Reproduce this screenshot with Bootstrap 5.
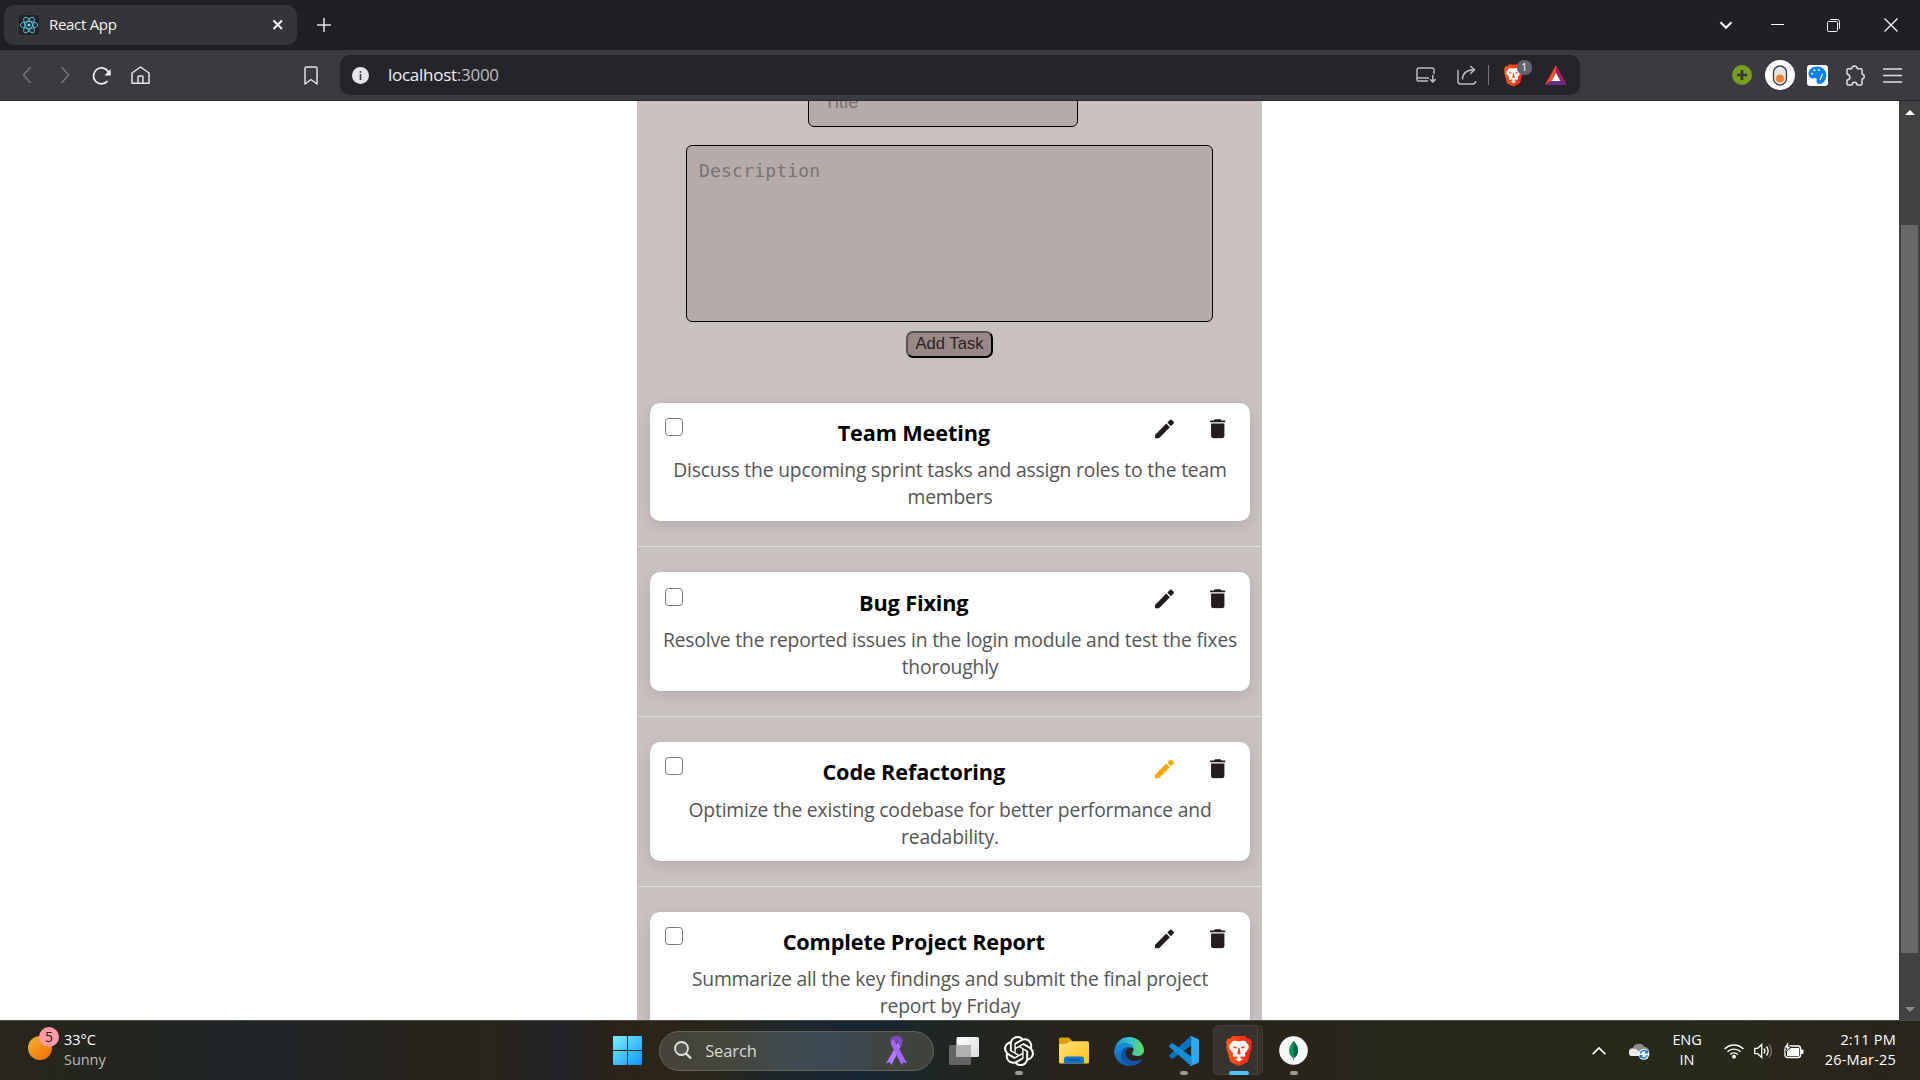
<!DOCTYPE html>
<html lang="en">
<head>
<meta charset="utf-8">
<title>React App</title>
<link rel="stylesheet" href="https://cdn.jsdelivr.net/npm/bootstrap@5.3.0/dist/css/bootstrap.min.css">
<style>
  body { width: 1920px; height: 1080px; overflow: hidden; font-family: "Open Sans", "Noto Sans", sans-serif; background: #fff; }
  svg { display: block; flex: none; overflow: visible; }

  /* Browser chrome */
  .tab-strip { height: 50px; background: #202024; padding-left: 4px; }
  .browser-tab { width: 293px; height: 40px; border-radius: 10px; background: #353539; color: #f3f3f5; padding: 0 13px 0 15px; font-size: 15px; letter-spacing: -.3px; }
  .tab-name { margin-left: 10px; padding-bottom: 1px; }
  .toolbar { height: 51px; background: #3b3a3f; border-bottom: 1px solid #2a2a2e; }
  .cell { display: flex; align-items: center; justify-content: center; flex: none; }
  .address { width: 1240px; height: 40px; border-radius: 10px; background: #252529; }
  .address-text { font-size: 17px; letter-spacing: -.27px; color: #f1f1f3; line-height: 24px; margin-left: 16px; }
  .address-text span { color: #bdbdc2; }
  .shield-count { top: -4px; left: 13px; width: 14.5px; height: 15px; border-radius: 7px; background: #62646f; color: #fff; font: 10.5px/15px "Open Sans", sans-serif; text-align: center; }
  .divider { width: 1px; height: 20px; background: #76767b; }

  /* Page */
  .viewport-area { height: 919px; overflow: hidden; }
  .todo-panel { width: 625px; background: #c9c0c0; }
  .field { display: block; background: #b5acaa; border: 1px solid #000; border-radius: 6px; outline: 0; resize: none; }
  .field::placeholder { color: #757575; opacity: 1; }
  .title-field { width: 270px; height: 47px; margin-top: -21px; margin-right: 13px; padding: 0 16px 4px 15px; font: 18.7px "Liberation Sans", sans-serif; }
  .desc-field { width: 527px; height: 177px; margin-top: 18px; padding: 14px 12px; font: 18px/22px "DejaVu Sans Mono", monospace; letter-spacing: .2px; }
  .add-btn { width: 87px; height: 27px; margin-top: 9px; padding: 0 0 1px; background: #988987; border: 2px outset #000; border-color: #555 #000 #000 #555; border-radius: 7px; color: #2a2222; font: 16.6px/20px "Liberation Sans", sans-serif; }
  .task-list { margin-top: 19.55px; }
  .task-item { padding: 25px 12px 25px 13px; border-bottom: 1px solid #ddd; }
  .task-card { height: 118.75px; background: #fff; border-radius: 10px; box-shadow: 0 4px 14px rgba(0,0,0,.1); }
  .task-head { padding: 15.3px 12.5px 0 15px; }
  .task-head input { appearance: none; width: 18px; height: 18px; margin: 0; border: 1.4px solid #767676; border-radius: 3.5px; background: #fff; }
  .task-title { font-size: 21.7px; line-height: 30px; letter-spacing: -.15px; font-weight: 700; color: #000; text-align: center; margin: 0; }
  .task-actions { gap: 13px; padding-top: .7px; }
  .task-actions .cell { width: 40px; height: 21px; color: #231c1c; }
  .task-actions .editing { color: orange; }
  .task-text { font-size: 19.3px; line-height: 27px; letter-spacing: -.175px; color: #555; text-align: center; padding: 0 12.2px; margin: 8.2px 0 0; }
  .scroll-track { width: 21px; background: #424242; }
  .scroll-thumb { width: 17px; height: 728px; background: #686868; margin-top: 102px; }

  /* Taskbar */
  .taskbar { height: 60px; border-top: 1px solid #444a40; color: #fff;
    background: linear-gradient(90deg, #29261d 0, #22251f 140px, #20252a 250px, #25231e 380px, #29241c 490px, #222427 560px, #2c2319 620px, #2a2617 700px, #1f2628 770px, #182735 860px, #202622 950px, #26231d 1060px, #28241c 1250px, #27271a 1400px, #252719 1600px, #252a1b 1710px, #2a261b 1800px, #29241c 100%); }
  .weather-icon { width: 64px; height: 59px; padding-left: 28px; padding-top: 7px; }
  .sun { width: 24px; height: 24px; border-radius: 50%; background: linear-gradient(135deg, #f5b32d, #f06a08); }
  .alert-count { left: 39px; top: 6px; width: 20px; height: 20px; border-radius: 50%; background: #ff99a2; color: #2d1518; font-size: 14px; line-height: 20px; text-align: center; }
  .tiny-line { font-size: 14.5px; line-height: 20px; letter-spacing: -.05px; padding-bottom: 1px; }
  .clock-lines { width: 92px; letter-spacing: .2px; }
  .search-pill { width: 275px; height: 40px; border-radius: 20px; border: 1px solid #64645c; background: linear-gradient(90deg, #454339 0, #46473c 25%, #3f4a50 48%, #3c4854 66%, #3f453f 84%, #40423c); padding: 0 26px 0 14px; color: #d9d9d6; font-size: 16.5px; letter-spacing: -.1px; }
  .app { width: 55px; height: 59px; position: relative; display: flex; align-items: center; justify-content: center; flex: none; }
  .app.running::after { content: ""; position: absolute; bottom: 5px; width: 8px; height: 4px; border-radius: 2px; background: #9a9a97; }
  .app.active::after { width: 20px; background: #4cc2ff; }
  .app.active::before { content: ""; position: absolute; inset: 4px 8px 5px 2px; border: 1px solid #45413c; border-radius: 5px; background: #37332e; box-shadow: 5px 0 0 -1px #34312b, 5px 0 0 #413e38; }
  .app svg { position: relative; }
</style>
<script src="https://cdn.jsdelivr.net/npm/bootstrap@5.3.0/dist/js/bootstrap.bundle.min.js"></script>
</head>
<body class="d-flex flex-column">

<svg width="0" height="0" class="position-absolute">
  <defs>
    <symbol id="pencil" viewBox="0 0 20 20"><path fill="currentColor" d="M0 20v-3.600L11.600 4.700l3.700 3.700L3.800 20zM16.300 7.400l-3.700-3.700 2.600-2.800q1-1 2 0l1.900 1.900q.9.9 0 1.800z"/></symbol>
    <symbol id="trash" viewBox="0 0 16 20"><path fill="currentColor" d="M0 1.400h4L5.200.2h5.600L12 1.400h4v1.900H0zM1.100 4.600h13.800v13q0 2.200-2.200 2.200H3.300q-2.200 0-2.200-2.200z"/></symbol>
    <linearGradient id="flame" x1="0" x2="1"><stop stop-color="#ff5a1f"/><stop offset="1" stop-color="#ff2010"/></linearGradient>
    <symbol id="lion" viewBox="0 0 26 30">
      <path fill="url(#flame)" d="M6.500 0h13l2.400 2.700 2.300-.2L26 6.300l-.8 2.400.6 2-3.600 13.500q-.5 1.700-2 2.600L13 30l-7.200-3.200q-1.500-.9-2-2.600L.2 10.700l.6-2L0 6.300l1.800-3.800 2.300.2z"/>
      <path fill="#fff" d="M13 5.500l3.200-.8 3 .3 3.500 4.300-.3 1.500.5 1.300-4 5.100.5 2.200-1.600 1.700-2.200-.9-1.600 1.400 2.700 1.700-3.700 2.500-3.700-2.500 2.700-1.700-1.600-1.400-2.200.9-1.600-1.700.5-2.200-4-5.100.5-1.300-.3-1.500L6.800 5l3-.3z"/>
      <path fill="#ff4015" d="M7 10.200l4.200.9-1 1.300-2.600-.4zM19 10.200l-4.200.9 1 1.300 2.600-.4zM12.300 12h1.400l.6 4.700 1.200.5L13 18.500l-2.500-1.300 1.200-.5z"/>
    </symbol>
  </defs>
</svg>

<header>
  <div class="tab-strip d-flex align-items-center">
    <div class="browser-tab d-flex align-items-center">
      <svg width="20" height="20" viewBox="0 0 20 20"><rect width="20" height="20" rx="2" fill="#222"/><g fill="none" stroke="#58bdd8" stroke-width="1"><ellipse cx="10" cy="10" rx="8.800" ry="3.400"/><ellipse cx="10" cy="10" rx="8.800" ry="3.400" transform="rotate(60 10 10)"/><ellipse cx="10" cy="10" rx="8.800" ry="3.400" transform="rotate(120 10 10)"/></g><circle cx="10" cy="10" r="1.600" fill="#61dafb"/></svg>
      <span class="tab-name flex-grow-1">React App</span>
      <svg width="12" height="12" viewBox="0 0 12 12"><path d="M1.500 1.500l8.500 8.500M10 1.500L1.500 10" stroke="#fff" stroke-width="2"/></svg>
    </div>
    <div class="cell" style="width:54px"><svg width="14" height="14" viewBox="0 0 14 14"><path d="M7 0v14M0 7h14" stroke="#e4e4e6" stroke-width="1.500"/></svg></div>
    <div class="d-flex align-items-center ms-auto">
      <div class="cell" style="width:48px"><svg width="14" height="8" viewBox="0 0 14 8"><path d="M1.500 1.200L7 6.700l5.500-5.500" fill="none" stroke="#f2f2f2" stroke-width="2.200"/></svg></div>
      <div class="cell" style="width:54px"><svg width="13" height="3" viewBox="0 0 13 3"><path d="M0 .5h13" stroke="#fff"/></svg></div>
      <div class="cell" style="width:58px"><svg width="13" height="13" viewBox="0 0 13 13"><g fill="none" stroke="#f4f4f4"><rect x=".5" y="2.500" width="10" height="10" rx="1"/><path d="M3 .5h7.500q2 0 2 2V10"/></g></svg></div>
      <div class="cell" style="width:58px"><svg width="14" height="14" viewBox="0 0 14 14"><path d="M.5.5l13 13M13.500.5l-13 13" stroke="#fff" stroke-width="1.200"/></svg></div>
    </div>
  </div>

  <div class="toolbar d-flex align-items-center">
    <div class="cell ms-2" style="width:38px"><svg width="10" height="18" viewBox="0 0 10 18"><path d="M8.500 1L1.500 9l7 8" fill="none" stroke="#76767c" stroke-width="1.500"/></svg></div>
    <div class="cell" style="width:38px"><svg width="10" height="18" viewBox="0 0 10 18"><path d="M1.500 1l7 8-7 8" fill="none" stroke="#76767c" stroke-width="1.500"/></svg></div>
    <div class="cell" style="width:36px"><svg width="20" height="18" viewBox="0 0 20 18"><path d="M15.500 15.200A8 8 0 1 1 16.500 6" fill="none" stroke="#f0f0f2" stroke-width="1.800"/><path d="M18.700 3v6.500h-6.200z" fill="#f0f0f2"/></svg></div>
    <div class="cell" style="width:40px"><svg width="19" height="18" viewBox="0 0 19 18"><g fill="none" stroke="#e8e8ea" stroke-width="1.500" stroke-linejoin="round"><path d="M1 7l8.500-6L18 7v10.300H1z"/><path d="M7 17v-6q0-1 1-1h3q1 0 1 1v6"/></g></svg></div>
    <div class="cell" style="width:40px;margin-left:131px"><svg width="14" height="19" viewBox="0 0 14 19"><path d="M1 2.500Q1 1 2.500 1h9Q13 1 13 2.500V18l-6-4.500L1 18z" fill="none" stroke="#e2e2e5" stroke-width="1.500" stroke-linejoin="round"/></svg></div>
    <div class="address d-flex align-items-center" style="margin-left:9px">
      <div class="cell ms-2" style="width:24px"><svg width="17" height="17" viewBox="0 0 17 17"><circle cx="8.500" cy="8.500" r="8.500" fill="#e4e4e8"/><path d="M8.500 4v1.700M8.500 7v6" stroke="#3c3c40" stroke-width="1.600"/></svg></div>
      <div class="address-text">localhost<span>:3000</span></div>
      <div class="cell ms-auto" style="width:40px"><svg width="20" height="16" viewBox="0 0 20 16"><g fill="none" stroke="#bcbcc0" stroke-width="1.500"><path d="M18 7V3q0-2-2-2H3Q1 1 1 3v10q0 1 1 1h10M1 11h12M16.800 8v7M14 12.200l2.800 2.700 2.800-2.700"/></g></svg></div>
      <div class="cell" style="width:42px"><svg width="20" height="20" viewBox="0 0 20 20"><g fill="none" stroke="#bcbcc0" stroke-width="1.500"><path d="M1 5v11.500Q1 19 3.500 19h12q3 0 3.200-3M5.500 14.500Q5.500 5 17 4.700M13.300 1l4.200 3.700-4.200 4"/></g></svg></div>
      <div class="divider"></div>
      <div class="cell" style="width:49px"><div class="position-relative"><svg width="19" height="23"><use href="#lion"/></svg><div class="shield-count position-absolute">1</div></div></div>
      <div class="cell" style="width:35px;margin-right:7px"><svg width="22" height="20" viewBox="0 0 22 20"><path fill="#ff4724" d="M11 0L0 20l7-4.500 4-7z"/><path fill="#9e1f63" d="M11 0l11 20-7-4.500-4-7z"/><path fill="#662d91" d="M0 20h22l-7-4.500H7z"/><path fill="#fff" d="M11 8l4.500 8h-9z"/></svg></div>
    </div>
    <div class="cell ms-auto" style="width:38px"><svg width="20" height="20" viewBox="0 0 20 20"><circle cx="10" cy="10" r="10" fill="#779e20"/><path d="M10 5v10M5 10h10" stroke="#30343b" stroke-width="2.600"/></svg></div>
    <div class="cell" style="width:38px"><svg width="30" height="30" viewBox="0 0 30 30"><circle cx="15" cy="15" r="15" fill="#fff"/><rect x="8.500" y="6" width="13" height="19" rx="6.500" fill="#e5e7e6" stroke="#434345" stroke-width="1.400"/><circle cx="15" cy="18.500" r="4" fill="#f5802e"/></svg></div>
    <div class="cell" style="width:37px"><svg width="21" height="21" viewBox="0 0 21 21"><rect width="21" height="21" rx="3" fill="#fff"/><path d="M10 1.500C5 1.500 1.500 5 1.500 8.700s3 5.300 5.500 4.500c2-.7 3.100.3 2.600 2.300-.4 2 .6 3.500 2.800 3.500 4 0 7-4.500 7-9.100S15.500 1.500 10 1.500z" fill="#0a80f5"/><g fill="#fff"><circle cx="5" cy="8.800" r="1"/><circle cx="7.500" cy="5.300" r="1"/><circle cx="12" cy="5" r="1"/></g><path d="M15.500 9L13 15" stroke="#fff" stroke-width="1.100"/></svg></div>
    <div class="cell" style="width:37px"><svg width="20" height="21" viewBox="0 0 20 21"><path d="M3 3.700h3.700q.4-2.700 2.800-2.700t2.800 2.700H16q1 0 1 1v4.200q2.200.4 2.200 2.600T17 14v5q0 1-1 1h-4q-.2-2.700-2.500-2.700T7 20H3q-1 0-1-1v-4q2.900-.3 2.900-2.800T2 9V4.700q0-1 1-1z" fill="none" stroke="#e0e0e3" stroke-width="1.500" stroke-linejoin="round"/></svg></div>
    <div class="cell" style="width:38px;margin-right:9px"><svg width="19" height="15" viewBox="0 0 19 15"><path d="M0 1h19M0 7.500h19M0 14h19" stroke="#dedee1" stroke-width="1.500"/></svg></div>
  </div>
</header>

<main class="viewport-area d-flex">
  <div class="flex-grow-1 d-flex justify-content-center">
    <div class="todo-panel">
      <form class="d-flex flex-column align-items-center">
        <input class="field title-field" placeholder="Title">
        <textarea class="field desc-field" placeholder="Description"></textarea>
        <button type="button" class="add-btn">Add Task</button>
      </form>
      <div class="task-list">
        <div class="task-item"><article class="task-card">
          <div class="task-head d-flex align-items-start"><input type="checkbox"><h2 class="task-title flex-grow-1">Team Meeting</h2>
            <div class="task-actions d-flex"><div class="cell"><svg width="19.500" height="19.500"><use href="#pencil"/></svg></div><div class="cell"><svg width="15.500" height="19.500"><use href="#trash"/></svg></div></div></div>
          <p class="task-text">Discuss the upcoming sprint tasks and assign roles to the team members</p>
        </article></div>
        <div class="task-item"><article class="task-card">
          <div class="task-head d-flex align-items-start"><input type="checkbox"><h2 class="task-title flex-grow-1">Bug Fixing</h2>
            <div class="task-actions d-flex"><div class="cell"><svg width="19.500" height="19.500"><use href="#pencil"/></svg></div><div class="cell"><svg width="15.500" height="19.500"><use href="#trash"/></svg></div></div></div>
          <p class="task-text">Resolve the reported issues in the login module and test the fixes thoroughly</p>
        </article></div>
        <div class="task-item"><article class="task-card">
          <div class="task-head d-flex align-items-start"><input type="checkbox"><h2 class="task-title flex-grow-1">Code Refactoring</h2>
            <div class="task-actions d-flex"><div class="cell editing"><svg width="19.500" height="19.500"><use href="#pencil"/></svg></div><div class="cell"><svg width="15.500" height="19.500"><use href="#trash"/></svg></div></div></div>
          <p class="task-text">Optimize the existing codebase for better performance and readability.</p>
        </article></div>
        <div class="task-item"><article class="task-card">
          <div class="task-head d-flex align-items-start"><input type="checkbox"><h2 class="task-title flex-grow-1">Complete Project Report</h2>
            <div class="task-actions d-flex"><div class="cell"><svg width="19.500" height="19.500"><use href="#pencil"/></svg></div><div class="cell"><svg width="15.500" height="19.500"><use href="#trash"/></svg></div></div></div>
          <p class="task-text">Summarize all the key findings and submit the final project<br>report by Friday</p>
        </article></div>
      </div>
    </div>
  </div>
  <div class="scroll-track d-flex flex-column align-items-center flex-shrink-0">
    <svg width="10" height="5" viewBox="0 0 10 5" style="margin-top:9px;margin-bottom:8px"><path d="M5 0l5 5H0z" fill="#fff"/></svg>
    <div class="scroll-thumb"></div>
    <svg class="mt-auto mb-2" width="10" height="5" viewBox="0 0 10 5"><path d="M5 5l5-5H0z" fill="#8a8a8a"/></svg>
  </div>
</main>

<footer class="taskbar d-flex align-items-center">
  <div class="weather-icon position-relative d-flex align-items-start"><div class="sun mt-2"></div><div class="alert-count position-absolute">5</div></div>
  <div class="tiny-line">33°C<br><span style="color:#bdbbb7">Sunny</span></div>
  <div class="d-flex align-items-center" style="margin-left:507.5px">
    <svg width="29" height="29" viewBox="0 0 29 29"><defs><linearGradient id="win" x1="0" y1="0" x2="1" y2="1" ><stop stop-color="#7aefff"/><stop offset="1" stop-color="#0d96f8"/></linearGradient><mask id="panes"><path fill="#fff" d="M0 0h14v14H0zM15 0h14v14H15zM0 15h14v14H0zM15 15h14v14H15z"/></mask></defs><rect width="29" height="29" rx="1" fill="url(#win)" mask="url(#panes)"/></svg>
    <div class="search-pill d-flex align-items-center" style="margin-left:17px">
      <svg width="18" height="19" viewBox="0 0 18 19"><circle cx="7.500" cy="7.500" r="6.500" fill="#55554f" stroke="#e2e2e0" stroke-width="1.800"/><path d="M12 12.500l5 5" stroke="#e2e2e0" stroke-width="2.400"/></svg>
      <span class="flex-grow-1" style="padding-left:13px;padding-top:1px">Search</span>
      <svg width="21" height="29" viewBox="0 0 21 29"><path d="M5 5l3 9 7.500 15 2-3 3.500 1.500L11.500 10 8 3z" fill="#9440e8"/><path d="M16 5l-3 9-7.500 15-2-3L0 27.500 9.500 11 13 3z" fill="#b27bff"/><path d="M4.500 5.500Q3.500 0 10.500 0t6 5.500q0 3-2 6.500l-2.500-5q0-2-1.500-2t-1.500 2l-2.500 5q-1.500-3.500-2-6.500z" fill="#7f4bc0"/><path d="M4.500 5.500q.5 3.500 3 7.500L16 29l1.500-3 3.500 1.500-9-16.500-4.500-7z" fill="#a864fa"/></svg>
    </div>
    <div class="app" style="margin-left:2px"><svg width="30" height="28" viewBox="0 0 30 28"><defs><linearGradient id="pane" x2="1" y2="1"><stop stop-color="#fff"/><stop offset="1" stop-color="#dcdcdc"/></linearGradient></defs><rect y="8" width="22" height="20" rx="1.500" fill="#646462"/><rect x="7.500" width="22.500" height="20" rx="1.500" fill="url(#pane)"/><path d="M7.500 8H22v12H7.500z" fill="#b2b2b1"/></svg></div>
    <div class="app running"><svg width="30" height="30" viewBox="0 0 24 24"><path fill="#fff" d="M22.2819 9.8211a5.9847 5.9847 0 0 0-.5157-4.9108 6.0462 6.0462 0 0 0-6.5098-2.9A6.0651 6.0651 0 0 0 4.9807 4.1818a5.9847 5.9847 0 0 0-3.9977 2.9 6.0462 6.0462 0 0 0 .7427 7.0966 5.98 5.98 0 0 0 .511 4.9107 6.051 6.051 0 0 0 6.5146 2.9001A5.9847 5.9847 0 0 0 13.2599 24a6.0557 6.0557 0 0 0 5.7718-4.2058 5.9894 5.9894 0 0 0 3.9977-2.9001 6.0557 6.0557 0 0 0-.7475-7.0729zm-9.022 12.6081a4.4755 4.4755 0 0 1-2.8764-1.0408l.1419-.0804 4.7783-2.7582a.7948.7948 0 0 0 .3927-.6813v-6.7369l2.02 1.1686a.071.071 0 0 1 .038.052v5.5826a4.504 4.504 0 0 1-4.4945 4.4944zm-9.6607-4.1254a4.4708 4.4708 0 0 1-.5346-3.0137l.142.0852 4.783 2.7582a.7712.7712 0 0 0 .7806 0l5.8428-3.3685v2.3324a.0804.0804 0 0 1-.0332.0615L9.74 19.9502a4.4992 4.4992 0 0 1-6.1408-1.6464zM2.3408 7.8956a4.485 4.485 0 0 1 2.3655-1.9728V11.6a.7664.7664 0 0 0 .3879.6765l5.8144 3.3543-2.0201 1.1685a.0757.0757 0 0 1-.071 0l-4.8303-2.7865A4.504 4.504 0 0 1 2.3408 7.872zm16.5963 3.8558L13.1038 8.364 15.1192 7.2a.0757.0757 0 0 1 .071 0l4.8303 2.7913a4.4944 4.4944 0 0 1-.6765 8.1042v-5.6772a.79.79 0 0 0-.407-.667zm2.0107-3.0231l-.142-.0852-4.7735-2.7818a.7759.7759 0 0 0-.7854 0L9.409 9.2297V6.8974a.0662.0662 0 0 1 .0284-.0615l4.8303-2.7866a4.4992 4.4992 0 0 1 6.6802 4.66zM8.3065 12.863l-2.02-1.1638a.0804.0804 0 0 1-.038-.0567V6.0742a4.4992 4.4992 0 0 1 7.3757-3.4537l-.142.0805L8.704 5.459a.7948.7948 0 0 0-.3927.6813zm1.0976-2.3654l2.602-1.4998 2.6069 1.4998v2.9994l-2.5974 1.4997-2.6067-1.4997Z"/></svg></div>
    <div class="app"><svg width="30" height="27" viewBox="0 0 30 27"><defs><linearGradient id="fold" x2="1" y2="1"><stop stop-color="#ffdf72"/><stop offset="1" stop-color="#ffc423"/></linearGradient></defs><path d="M0 2q0-1.500 1.500-1.500H9q1 0 1.700.8L13 4l-2 5H0z" fill="#dea008"/><path d="M0 7q6.500 0 8.500-.8L11 4.200h17.500q1.500 0 1.500 1.500V25q0 1.500-1.500 1.500h-27Q0 26.500 0 25z" fill="url(#fold)"/><path d="M5 26.500V22q0-2.500 2.500-2.500h15Q25 19.500 25 22v4.500z" fill="#1275cc"/><path d="M9 23h12" stroke="#0b4f95" stroke-width="1.300" stroke-linecap="round"/></svg></div>
    <div class="app"><svg width="30" height="30" viewBox="0 0 30 30"><defs><linearGradient id="e1" x1="0" x2="1"><stop stop-color="#1c93db"/><stop offset=".5" stop-color="#35c1d5"/><stop offset="1" stop-color="#65da55"/></linearGradient><linearGradient id="e2" x1="0" y1="0" x2="0" y2="1"><stop stop-color="#178fd8"/><stop offset="1" stop-color="#0d5fb3"/></linearGradient></defs><path d="M.5 13A15 15 0 0 1 30 13.500c.5 4.500-3 6.500-6.500 6.500-3.500 0-5.500-1-5.500-2.500 0-1 1.500-1.500 1.500-4C19.500 10 16 7.500 11.500 7.500 6 7.500 2 10 .5 13z" fill="url(#e1)"/><path d="M0 15C1 10 6 7.500 11.500 7.500c4 0 7 2 7.700 4.500-7-1.500-10.200 3-10.200 7.500 0 5 4 9 8.500 10.200A15 15 0 0 1 0 15z" fill="url(#e2)"/><path d="M19 12c-5-1-7.500 2-7.500 5 0 5 5 8 9 8 3.500 0 6-2 7-2 .7 0 .5 1 0 1.500-3 4-7 5.500-11 5.400-5-1.900-9.500-5.900-9.500-11.400C7 13.500 12 9 19 12z" fill="#174fa2"/></svg></div>
    <div class="app running"><svg width="30" height="30" viewBox="0 0 30 30"><path d="M1 18.500L21.500.5 23 9 4 22.500q-1 .5-1.700-.1L.3 20.600q-.9-1 .7-2.100z" fill="#0a72c2"/><path d="M1 11.500L21.500 29.500 23 21 4 7.500q-1-.5-1.700.1L.3 9.400q-.9 1 .7 2.100z" fill="#168dd9"/><path d="M21.800 0L29 3q1 .6 1 1.700v20.600q0 1.100-1 1.700l-7.200 3q-1 .2-1.600-.7 1.600.5 2-1.300V2q-.4-1.800-2-1.300.6-.9 1.600-.7z" fill="#2eaaf5"/></svg></div>
    <div class="app running active"><svg width="26" height="30"><use href="#lion"/></svg></div>
    <div class="app running"><svg width="29" height="29" viewBox="0 0 29 29"><circle cx="14.500" cy="14.500" r="14.300" fill="#f6f8f7"/><path d="M14.500 5q4.500 4.500 4.500 9.500T14.900 22l-.2 2.500h-.5L14 22q-4-3-4-7.500T14.500 5z" fill="#10935a"/><path d="M14.500 5q4.500 4.500 4.500 9.500T14.900 22z" fill="#0b6546"/></svg></div>
  </div>
  <div class="d-flex align-items-center ms-auto" style="padding-right:24px">
    <svg width="14" height="8" viewBox="0 0 14 8"><path d="M.7 7.200L7 1l6.300 6.200" fill="none" stroke="#fff" stroke-width="1.700"/></svg>
    <svg width="21" height="18" viewBox="0 0 21 18" style="margin-left:23px"><path d="M4 14a4 4 0 0 1-.2-8A6.500 6.500 0 0 1 15.500 5 4.500 4.500 0 0 1 16 14z" fill="#8d8d8b"/><path d="M3.500 14a3.600 3.600 0 0 1 0-7.200Q7 6 9.500 9l5.500 5z" fill="#e9e9e8"/><circle cx="14.800" cy="12.300" r="5.500" fill="#f5faff"/><path d="M11.300 11.500a3.600 3.600 0 0 1 6.600-1.200M18.300 13a3.600 3.600 0 0 1-6.600 1.400M18.300 8.600v2.200h-2.200M11.300 16v-2.200h2.200" fill="none" stroke="#1478d4" stroke-width="1.400"/></svg>
    <div class="tiny-line text-center" style="width:56px;margin-left:9px;letter-spacing:-.1px">ENG<br>IN</div>
    <svg width="20" height="16" viewBox="0 0 20 16" style="margin-left:9px"><g fill="none" stroke="#fff" stroke-width="1.400"><path d="M.6 6a13 13 0 0 1 18.800 0M3.500 8.800a9.300 9.300 0 0 1 13 0M6.300 11.500a5.500 5.500 0 0 1 7.400 0"/></g><circle cx="10" cy="13.700" r="1.900" fill="#fff"/></svg>
    <svg width="20" height="16" viewBox="0 0 20 16" style="margin-left:10px"><g fill="none" stroke="#fff" stroke-width="1.300"><path d="M.7 5.300h3L7.700 1.500v13l-4-3.800h-3z"/><path d="M10 5.500q1.800 2.500 0 5M12.500 3.500q3.300 4.500 0 9"/><path d="M15 1.500q5 6.500 0 13" stroke="#74746b"/></g></svg>
    <svg width="20" height="17" viewBox="0 0 20 17" style="margin-left:10px"><rect x="1" y="4" width="15.500" height="11.500" rx="2.500" fill="none" stroke="#fff" stroke-width="1.400"/><path d="M3 9l4-3h8v8H3z" fill="#fff"/><path d="M17 7.500h1.500q1 0 1 1v2.500q0 1-1 1H17z" fill="#fff"/><path d="M4.500-1L0 6h2.800L1.500 10.500 7 4.500H4.500z" fill="#fff" stroke="#27271c" stroke-width=".7"/></svg>
    <div class="tiny-line clock-lines text-end">2:11 PM<br>26-Mar-25</div>
  </div>
</footer>
</body>
</html>
